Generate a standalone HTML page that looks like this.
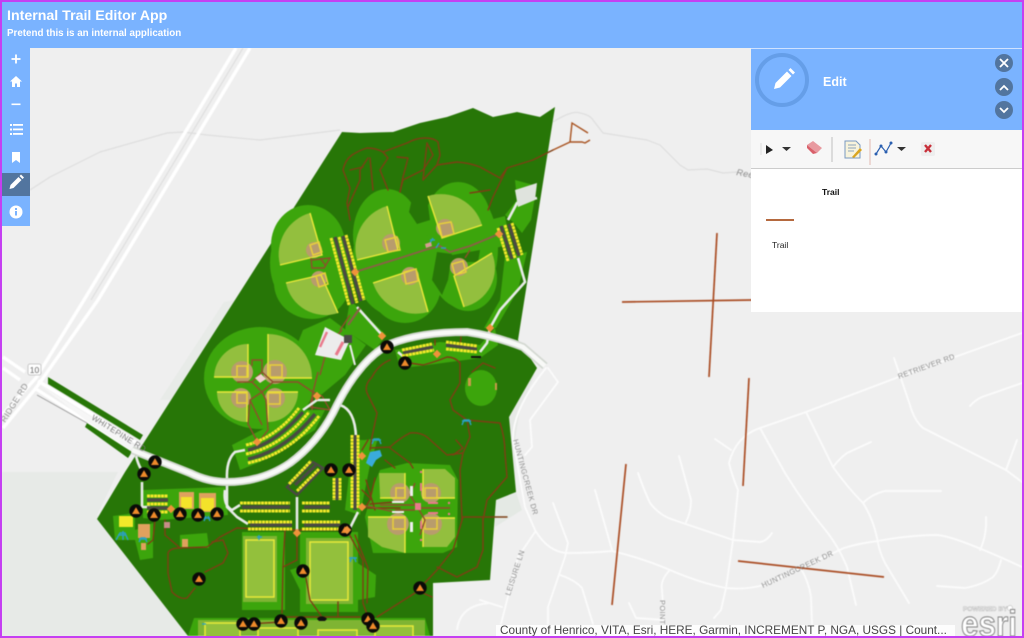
<!DOCTYPE html>
<html lang="en">
<head>
<meta charset="utf-8">
<title>Internal Trail Editor App</title>
<style>
html,body{margin:0;padding:0;width:1024px;height:638px;overflow:hidden;background:#efefef;font-family:"Liberation Sans",sans-serif}
#map{position:absolute;left:0;top:0;width:1024px;height:638px;filter:blur(.4px)}
#hdr{position:absolute;left:2px;top:2px;width:1020px;height:46px;background:#7ab3ff;color:#fff}
#hdr .a{position:absolute;left:5px;top:5px;font:bold 14.2px "Liberation Sans",sans-serif;white-space:nowrap}
#hdr .b{position:absolute;left:5px;top:25px;font:bold 9.8px "Liberation Sans",sans-serif;white-space:nowrap}
#side{position:absolute;left:2px;top:48px;width:28px;height:178px;background:#7ab3ff}
#act{position:absolute;left:0;top:125px;width:28px;height:23px;background:#52759f}
#panel{position:absolute;left:751px;top:48px;width:271px;height:264px;background:#fff}
#ph{position:absolute;left:0;top:0;width:271px;height:82px;background:#7ab3ff;border-top:1px solid #cfe2ff;box-sizing:border-box}
#ph .t{position:absolute;left:72px;top:26px;color:#fff;font:bold 12.5px "Liberation Sans",sans-serif}
#tb{position:absolute;left:0;top:82px;width:271px;height:39px;background:#f7f7f7;border-bottom:1px solid #ccc;box-sizing:border-box}
.lb{position:absolute;font-size:8.5px;color:#222;white-space:nowrap}
#attr{position:absolute;left:496px;top:625px;width:459px;height:11px;background:rgba(255,255,255,.85);overflow:hidden}
#attr span{position:absolute;left:4px;top:-2px;font-size:11.8px;color:#444;white-space:nowrap;line-height:14px}
#bd{position:absolute;left:0;top:0;width:1024px;height:638px;box-sizing:border-box;border:2px solid #c53ff2;pointer-events:none}
</style>
</head>
<body>
<svg id="map" viewBox="0 0 1024 638" xmlns="http://www.w3.org/2000/svg">
<defs>
<g id="m"><circle r="6.7" fill="#0a0a08"/><path d="M0-3.8L4 3H-4Z" fill="#ee8a2a"/></g>
<path id="dm" d="M0-4.2L4.2 0 0 4.2-4.2 0Z" fill="#f0923a"/>
</defs>
<rect width="1024" height="638" fill="#efefef"/>
<!-- pale -->
<path d="M2 472H118L97 515 188 636H2Z" fill="#e7eae7"/>
<path d="M224 302L235 300 172 400 160 400Z" fill="#e8ebe8"/>
<path d="M516 492L496 500 495 527 522 510Z" fill="#e4e9e4"/>
<path d="M509 417L528 378 535 374 520 410 515 440 516 492Z" fill="#e6e9e6"/>
<!-- contour paths -->
<g fill="none" stroke="#dedede" stroke-width="1.2" stroke-linejoin="round">
<path d="M30 190L50 177 100 152 167 133 183 132 207 135 260 140 340 130"/>
<path d="M553 122Q572 110 580 113 590 115 593 120L603 133 647 140 660 145 680 165 688 170 707 169 723 173 737 172 752 178"/>
</g>
<!-- highway -->
<g fill="none" stroke="#fff" stroke-width="3.4">
<path d="M236 48L84 300 36 378 3 414"/>
<path d="M250 48L98 300 36 388 3 428"/>
<path d="M3 357L25 372"/><path d="M3 368L20 380"/>
<path d="M38 381L90 413 140 445"/><path d="M36 389L88 422 130 450"/>
</g>
<path d="M243 48L91 300" stroke="#dcdcdc" stroke-width="1" fill="none"/>
<path d="M37 395L87 423" stroke="#9c9c9c" stroke-width="1" fill="none"/>
<path d="M40 385L90 416 135 446 130 450 88 422Z" fill="#f6f6f6"/>
<!-- local roads -->
<g fill="none" stroke="#fbfbfb" stroke-width="1.9" stroke-linejoin="round" stroke-linecap="round">
<path d="M1022 333L896 378 806 412 760 428Q736 436 729 463Q732 476 738 490L733 540 726 588 721 610 714 618"/>
<path d="M548 368L558 382 530 420 532 447 525 455"/>
<path d="M546 368Q512 410 513 440L525 507 535 530Q548 552 567 553Q590 553 612 551 642 558 670 570 700 583 726 588 745 590 764 585L844 548Q860 543 878 541 910 535 937 535 955 536 1022 567"/>
<path d="M715 439L731 450"/>
<path d="M760 428L785 473Q805 505 823 527 838 545 847 567L856 605"/>
<path d="M806 412L833 467Q848 488 863 503 874 520 878 543 880 553 885 563L909 603"/>
<path d="M833 467Q840 458 847 453L871 442"/>
<path d="M863 503Q872 494 885 491L941 491"/>
<path d="M894 358L910 405Q914 420 923 428L1006 470 1022 482"/>
<path d="M970 406Q975 400 982 397L1022 383"/>
<path d="M1006 470L1017 440"/>
<path d="M986 517Q987 535 980 550"/>
<path d="M1001 560Q998 572 993 577 982 585 965 588L937 586"/>
<path d="M800 567Q809 582 811 597L812 624"/>
<path d="M638 473Q644 490 650 503 660 516 674 520L733 540 760 542Q767 541 772 533"/>
<path d="M679 456L691 500Q691 512 686 522"/>
<path d="M595 490L612 550"/>
<path d="M553 503L568 543 565 557 548 607V624"/>
<path d="M560 575Q575 580 582 588L593 624"/>
<path d="M535 532L518 557 501 624"/>
<path d="M480 600L502 607"/>
<path d="M670 570Q660 580 662 590L664 620"/>
<path d="M629 603L636 618 664 620"/>
</g>
<!-- main site -->
<path d="M342 132L360 133 393 132 420 123 447 117 473 108 493 117 517 112 540 117 555 107 518 340 537 368 509 417 516 492 496 500 490 580 433 583 433 636H188L97 519 125 472 235 300Z" fill="#277607"/>
<path d="M48 377L143 435 140 440 48 384Z" fill="#277607"/>
<path d="M87 423L132 452 128 458 85 427Z" fill="#277607"/>
<path d="M457 630Q460 605 490 603" fill="none" stroke="#fafafa" stroke-width="2"/>
<!-- medium pads -->
<g fill="#3ca50c">
<ellipse cx="308" cy="245" rx="37" ry="40"/>
<ellipse cx="312" cy="283" rx="38" ry="36"/>
<ellipse cx="310" cy="263" rx="40" ry="50"/>
<ellipse cx="387" cy="235" rx="34" ry="46"/>
<ellipse cx="405" cy="285" rx="36" ry="38"/>
<ellipse cx="395" cy="258" rx="42" ry="58"/>
<ellipse cx="458" cy="222" rx="33" ry="40"/>
<ellipse cx="468" cy="278" rx="29" ry="33"/>
<ellipse cx="462" cy="248" rx="36" ry="60"/>
<path d="M345 262L420 238 505 216 510 244 440 264 360 292Z"/>
<path d="M515 180L537 186 531 220 522 233 513 222 505 215 517 200Z"/>
<path d="M505 256L527 252 518 290 496 328 484 328 500 300Z"/>
<path d="M350 300L386 335 375 350 345 330Z"/>
<path d="M303 330L330 318 366 345 345 375 315 400 295 350Z"/>
<ellipse cx="260" cy="378" rx="56" ry="51"/>
<path d="M232 445L300 410 325 410 315 430 260 462 240 470Z"/>
<path d="M395 350L440 342 480 345 495 328 498 345 480 358 420 366 400 368Z"/>
<path d="M353 440L365 440 378 438 370 465 360 515 345 510Z"/>
<path d="M380 470L407 463 450 465 458 480 457 547 443 553 373 553 365 517 373 487Z"/>
<ellipse cx="481" cy="388" rx="16" ry="18"/>
<path d="M113 516L135 513 135 530 153 523 153 558 140 560 135 540 115 540Z"/>
<path d="M143 490L225 487 228 515 160 520 143 518Z"/>
<path d="M180 535L207 533 209 548 180 548Z"/>
<path d="M242 532H285V610H242Z"/>
<path d="M300 532H358V612H300Z"/>
<path d="M353 560L376 575 375 597 358 600Z"/>
<path d="M290 570L305 565 300 590Z"/>
<path d="M194 618L425 618 430 636H188Z"/>
</g>
<path d="M447 256L480 250 478 262 447 262Z" fill="#277607"/>
<path d="M417 224L409 212 414 190 426 190 430 220Z" fill="#277607"/>
<path d="M437 252L452 254 448 280 442 295 432 280Z" fill="#277607"/>
<!-- soccer halos -->
<g fill="#7fb433">
<rect x="243" y="536" width="34" height="66"/>
<rect x="306" y="538" width="47" height="66"/>
<path d="M198 620H425V636H198Z"/>
</g>
<g fill="#93c03c" stroke="#e9e93a" stroke-width="1.5">
<rect x="246" y="540" width="28" height="57"/>
<rect x="310" y="542" width="38" height="58"/>
<rect x="205" y="623" width="35" height="16"/>
<rect x="258" y="628" width="40" height="14"/>
<rect x="318" y="630" width="39" height="14"/>
<rect x="375" y="626" width="38" height="16"/>
</g>
<!-- ball fields -->
<g fill="#93bf3e">
<path d="M322 255L310 213A43 43 0 0 0 280 265Z"/>
<path d="M321 275L286 283A40 40 0 0 0 338 313Z"/>
<path d="M398 250L387 206A44 44 0 0 0 357 260Z"/>
<path d="M416 269L373 283A45 45 0 0 0 428 312Z"/>
<path d="M442 238L428 196A43 43 0 0 1 482 225Z"/>
<path d="M454 276L492 253A40 40 0 0 1 464 307Z"/>
<path d="M248 377V344A34 34 0 0 0 214 377Z"/>
<path d="M268 378V334A44 44 0 0 1 312 378Z"/>
<path d="M247 392H217A30 30 0 0 0 247 422Z"/>
<path d="M268 392H298A30 30 0 0 1 268 422Z"/>
<path d="M379 473L405 473 405 500 380 497Z"/>
<path d="M423 469L445 469 455 478 455 498 423 500Z"/>
<path d="M368 517L405 517 405 553 382 547 368 537Z"/>
<path d="M423 518L455 518 455 537 447 547 423 547Z"/>
</g>
<!-- infields -->
<g fill="#b89c6c">
<circle cx="314" cy="250" r="8"/><circle cx="319" cy="279" r="8"/>
<circle cx="391" cy="243" r="9"/><circle cx="410" cy="276" r="9"/>
<circle cx="445" cy="228" r="9"/><circle cx="459" cy="267" r="9"/>
<circle cx="242" cy="372" r="11"/><circle cx="275" cy="372" r="12"/>
<circle cx="241" cy="398" r="10"/><circle cx="275" cy="398" r="10"/>
<circle cx="400" cy="493" r="10"/><circle cx="431" cy="493" r="10"/>
<circle cx="398" cy="524" r="11"/><circle cx="431" cy="524" r="11"/>
</g>
<!-- yellow lines -->
<g fill="none" stroke="#ece93a" stroke-width="1.4">
<path d="M310 213L322 255 280 265"/><path d="M286 283L321 275 338 313"/>
<path d="M387 206L398 250 357 260"/><path d="M373 283L416 269 428 312"/>
<path d="M428 196L442 238 482 225"/><path d="M492 253L454 276 464 307"/>
<path d="M248 344V377H214"/><path d="M268 334V378H312"/>
<path d="M217 392H247V422"/><path d="M298 392H268V422"/>
<path d="M405 473V498H380"/><path d="M423 469V498H455"/>
<path d="M368 517H405V553"/><path d="M455 518H423V547"/>
</g>
<g fill="none" stroke="#e8d03a" stroke-width="1.5">
<path d="M310 245l9-3 3 10-9 3z"/><path d="M316 276l9-3 3 11-9 3z"/>
<path d="M385 240l12-3 3 13-12 2z"/><path d="M404 272l12-3 2 12-12 3z"/>
<path d="M439 224l12-2 3 12-12 3z"/><path d="M452 264l11-3 3 11-11 3z"/>
<path d="M237 366h10v11h-10z"/><path d="M270 365h12v12h-12z"/>
<path d="M237 393h10v10h-10z"/><path d="M268 393h12v11h-12z"/>
<path d="M396 488h9v10h-9z"/><path d="M425 488h12v10h-12z"/>
<path d="M393 518h12v11h-12z"/><path d="M425 518h12v11h-12z"/>
</g>
<!-- trails -->
<g fill="none" stroke="#7c3f14" stroke-width="1.4" stroke-linejoin="round" stroke-linecap="round">
<path d="M350 220L347 203 350 188 343 170Q345 160 352 155 360 150 367 148 376 148 383 152L407 143Q416 138 425 138 434 138 438 142L440 155 437 165 457 162Q470 163 480 167L500 178 507 168 533 160 553 150" />
<path d="M507 168L493 197 488 210"/><path d="M490 190L470 193"/>
<path d="M427 143L433 155 423 170 403 180 400 192"/><path d="M427 143L423 180"/>
<path d="M383 152L388 158 380 170 388 190"/>
<path d="M397 157L408 158 403 177 400 192"/>
<path d="M368 158L360 170 360 180 348 207"/><path d="M370 158L373 190"/><path d="M350 170L363 167"/>
<path d="M437 165L423 180"/>
<path d="M390 360Q378 365 372 377 364 385 367 393L377 413 372 437 370 450"/>
<path d="M403 362L423 365Q435 362 447 357 455 357 460 363V383L450 400 453 410 467 420 470 437 463 453 460 470 462 520"/>
<path d="M370 448L390 447Q400 438 410 433 420 432 427 437L447 455 463 453"/>
<path d="M390 448L410 463 413 468"/>
<path d="M467 420L500 423Q505 438 505 453L507 477 487 500 483 520"/>
<path d="M463 517H507"/>
<path d="M472 372L483 363 495 368"/>
<path d="M453 455L463 448 456 440"/>
<path d="M237 528L220 537 207 547 180 548Q170 548 168 553V573L172 592Q180 600 187 598L195 588"/>
<path d="M205 572L223 563 228 553 223 540 212 542"/>
<path d="M237 528L290 530 347 530"/>
<path d="M285 530L283 567 282 613"/><path d="M297 537V560L283 567"/>
<path d="M306 578L310 600 322 617"/>
<path d="M247 624L282 622 282 617 360 617"/>
<path d="M338 602V617"/>
<path d="M347 530L363 560V603L368 617"/>
<path d="M355 535L368 568 367 603"/>
<path d="M377 617L415 593 437 570 453 550 463 517"/>
<path d="M437 567L457 577 477 567 483 550V517"/>
<path d="M423 593L432 597"/>
<path d="M165 520V535L180 548"/>
<path d="M155 520L153 540 148 544"/>
<path d="M375 478L370 500 365 508M362 490L372 500M366 480L375 510"/>
<path d="M367 508H400M370 504L395 502"/>
<path d="M362 450L368 440"/><path d="M385 460L395 468"/>
<path d="M461 337L460 347"/><path d="M435 340V345"/>
</g>
<path d="M553 150L570 142 572 123 588 133M570 142H582L585 143 590 140" fill="none" stroke="#a8521f" stroke-width="1.4"/>
<!-- field networks -->
<g fill="none" stroke="#8e4f2c" stroke-width="1.4">
<path d="M355 272L400 258 425 250 440 246 450 252 470 246 499 234" stroke="#8a6046" stroke-width="1.8"/>
<path d="M470 250L465 258"/>
<path d="M312 260L330 258 324 268 312 268 311 258M320 258L326 266"/>
<path d="M350 315L340 330"/>
<path d="M252 366V360H262V372L273 382 262 392 252 382 262 372M252 382H237M273 382H298L313 392 312 410M262 392L250 400 248 424 258 443M262 392L266 400 268 430 258 443M250 400L262 425"/>
<path d="M318 372L313 392M322 396L313 392 310 407 330 410 322 396"/>
<path d="M320 375L328 345 342 330"/>
<path d="M380 505H418M418 508L410 495 415 483M418 508L425 520 420 535M418 508H450M395 510H415M362 505L395 512"/>
</g>
<g fill="#e9798b">
<path d="M255 378l6-4 5 5-6 4z" fill="#f0d0d0"/>
<rect x="415" y="503" width="6" height="7"/>
<rect x="420" y="483" width="2" height="8"/><rect x="420" y="521" width="2" height="8"/>
<rect x="428" y="502" width="10" height="2"/><rect x="428" y="512" width="10" height="2"/>
<circle cx="421" cy="472" r="1.2"/><circle cx="449" cy="503" r="1.2"/><circle cx="449" cy="514" r="1.2"/><circle cx="421" cy="540" r="1.2"/>
</g>
<g fill="#efefef">
<rect x="410" y="486" width="3" height="10"/><rect x="410" y="522" width="3" height="10"/>
<rect x="392" y="501" width="12" height="2"/><rect x="392" y="511" width="12" height="2"/>
</g>
<!-- white service roads -->
<g fill="none" stroke="#e8ebe8" stroke-width="2.6" stroke-linejoin="round">
<path d="M357 307L382 335"/>
<path d="M518 258L525 282 500 310 490 328 487 343 480 352"/>
<path d="M508 220L517 203 537 198"/>
<path d="M227 480Q226 460 235 452L245 450"/>
<path d="M227 483V507L237 517 248 524"/>
<path d="M297 497V530"/>
<path d="M340 405Q355 410 356 437"/>
<path d="M303 410L317 400H330"/>
<path d="M142 482V507H150"/>
<path d="M136 456Q140 472 148 476"/>
<path d="M398 352L405 358"/>
<path d="M340 530L350 528 358 512"/>
<path d="M225 490Q223 505 232 510L240 505"/>
</g>
<path d="M515 190L537 183 535 200 518 207Z" fill="#dfe3dd"/>
<!-- building -->
<path d="M325 327L350 340 341 360 315 355Z" fill="#ececec"/>
<path d="M320 347L327 332" stroke="#e9798b" stroke-width="2.4" fill="none"/>
<path d="M336 355L343 342" stroke="#e9798b" stroke-width="3" fill="none"/>
<path d="M344 335h8v8h-8z" fill="#4a4a45"/>
<path d="M348 325L360 308" stroke="#8a6046" stroke-width="2.2" fill="none"/>
<path d="M350 345L355 365" stroke="#ececec" stroke-width="2" fill="none"/>
<!-- main road -->
<g fill="none">
<path d="M132 450L190 473Q208 482 227 482Q262 482 290 463 317 443 333 413 345 388 357 373 372 353 390 344 420 332 467 332 495 336 523 347L545 366" stroke="#d3d8d1" stroke-width="8"/>
<path d="M132 450L190 473Q208 482 227 482Q262 482 290 463 317 443 333 413 345 388 357 373 372 353 390 344 420 332 467 332 495 336 523 347L545 366" stroke="#f8f9f7" stroke-width="4.5"/>
</g>
<!-- parking -->
<g fill="none">
<g stroke="#4a4a42" stroke-width="3.4">
<path d="M335 237L353 304M343 236L361 301"/>
<path d="M501 226L512 259M509 224L519 256"/>
<path d="M403 353L433 347M446 345L477 349"/>
<path d="M248 459Q285 451 315 414"/>
<path d="M248 450Q276 443 303 412" />
<path d="M287 487L313 462 323 468 297 495Z" stroke-width="2.4"/>
<path d="M295 485L316 465"/>
<path d="M337 478V500M355 435V510" stroke-width="4"/>
<path d="M242 507H290M304 507H330M250 525H292M304 525H340"/>
<path d="M147 500H168M147 508H168"/>
</g>
<g stroke="#f3e92a" stroke-width="3" stroke-dasharray="3 .5">
<path d="M331 238L349 305M339 237L357 303M346 235L364 300"/>
<path d="M498 228L508 261M505 225L515 258M512 223L522 255"/>
<path d="M402 350L432 344M402 356L434 350M446 342L477 346M446 349L477 352"/>
<path d="M246 445Q276 438 299 408M246 454Q281 447 309 412M248 463Q290 454 319 416"/>
<path d="M289 484L311 461M297 491L319 469"/>
<path d="M334 478V500M340 478V500M352 435V508M358 435V508"/>
<path d="M240 503H290M240 511H290M302 503H330M302 511H330M248 522H292M248 529H292M302 522H340M302 529H340"/>
<path d="M147 496H168M147 504H168M147 512H168"/>
</g>
</g>
<!-- left blocks -->
<rect x="119" y="516" width="14" height="11" fill="#f2e92a"/>
<rect x="138" y="524" width="12" height="14" fill="#e0a15e"/>
<rect x="141" y="543" width="5" height="7" fill="#e0a15e"/>
<rect x="179" y="492" width="15" height="17" fill="#e0a15e"/><rect x="181" y="497" width="11" height="11" fill="#f3e32a"/>
<rect x="199" y="493" width="17" height="19" fill="#e0a15e"/><rect x="201" y="498" width="13" height="13" fill="#f3e32a"/>
<rect x="182" y="539" width="6" height="8" fill="#e0a15e"/>
<rect x="164" y="522" width="6" height="6" fill="#c88c88"/>
<rect x="468" y="378" width="3" height="8" fill="#c99a4a"/><rect x="495" y="383" width="2" height="7" fill="#c99a4a"/>
<!-- teal -->
<g fill="none" stroke="#2aa0c4" stroke-width="1.4">
<path d="M116 540l4-7h5l3 7M118 535h8M123 531v9M139 542l2-4h4l2 4M139 539h8"/>
<path d="M204 518h6M204 521l2-5M210 521l-2-5"/>
<path d="M462 425l2-5h5l2 5M462 421h9"/>
<path d="M372 444l2-5h5l2 5M372 440h9"/>
<path d="M257 537h5M259 535v5"/>
<path d="M349 558h8M350 562l2-5M356 562l-2-5"/>
<path d="M298 573h8M299 577l2-5M305 577l-2-5"/>
<path d="M202 624h4"/>
<path d="M430 243l3-5M436 248l3-5M441 248h5M430 240h5"/>
</g>
<path d="M370 452L380 450 382 456 376 460 372 467 366 463Z" fill="#3aabdc"/>
<path d="M425 244l6-2 1 4-6 2z" fill="#e79aa0" opacity=".9"/>
<path d="M317 619c2-4 8-3 10 0l-2 2h-6z" fill="#111"/>
<path d="M471 356h10v2h-10z" fill="#111"/>
<!-- diamonds -->
<use href="#dm" x="355" y="272"/><use href="#dm" x="499" y="234"/><use href="#dm" x="382" y="336"/><use href="#dm" x="490" y="328"/>
<use href="#dm" x="437" y="354"/><use href="#dm" x="317" y="396"/><use href="#dm" x="257" y="442"/><use href="#dm" x="362" y="456"/>
<use href="#dm" x="362" y="507"/><use href="#dm" x="297" y="533"/><use href="#dm" x="171" y="509"/>
<!-- markers -->
<use href="#m" x="387" y="347"/><use href="#m" x="405" y="363"/><use href="#m" x="331" y="470"/><use href="#m" x="349" y="470"/>
<use href="#m" x="155" y="462"/><use href="#m" x="144" y="474"/><use href="#m" x="136" y="511"/><use href="#m" x="154" y="515"/>
<use href="#m" x="180" y="514"/><use href="#m" x="198" y="515"/><use href="#m" x="217" y="514"/><use href="#m" x="199" y="579"/>
<use href="#m" x="303" y="571"/><use href="#m" x="420" y="588"/><use href="#m" x="243" y="624"/><use href="#m" x="254" y="624"/>
<use href="#m" x="281" y="621"/><use href="#m" x="301" y="623"/><use href="#m" x="368" y="619"/><use href="#m" x="373" y="626"/>
<use href="#m" x="345" y="530"/>
<use href="#dm" x="347" y="530"/>
<!-- editable trails -->
<g stroke="#aa4d24" stroke-width="1.7" fill="none">
<path d="M717 233L709 377"/><path d="M622 302L752 300"/><path d="M749 378L743 486"/>
<path d="M626 464L612 605"/><path d="M738 561L884 577"/>
</g>
<!-- labels -->
<g font-family="'Liberation Sans',sans-serif" fill="#8d8d8d" font-size="7.5" letter-spacing=".35">
<text transform="translate(899 379) rotate(-20)">RETRIEVER RD</text>
<text transform="translate(763 588) rotate(-25)">HUNTINGCREEK  DR</text>
<text transform="translate(510 596) rotate(-72)">LEISURE LN</text>
<text transform="translate(660 600) rotate(90)">POINT</text>
<text transform="translate(513 440) rotate(75)">HUNTINGCREEK  DR</text>
<text transform="translate(91 419) rotate(32)" fill="#777" font-size="8">WHITEPINE  RD</text>
<text transform="translate(5 423) rotate(-58)" font-size="8.5">RIDGE RD</text>
<text transform="translate(736 175) rotate(10)" font-style="italic" font-size="9">Ree</text>
</g>
<rect x="28" y="364" width="13" height="11" rx="2" fill="#fff" stroke="#bbb" stroke-width=".8"/>
<text x="34.5" y="373" font-family="'Liberation Sans',sans-serif" font-size="8.5" fill="#666" text-anchor="middle">10</text>
<!-- esri -->
<text x="963" y="611" font-family="'Liberation Sans',sans-serif" font-size="6.5" font-weight="bold" fill="#fff" stroke="#9a9a9a" stroke-width=".3">POWERED BY</text>
<circle cx="1010" cy="608" r="2.6" fill="#fff" stroke="#999" stroke-width=".4"/>
<text x="961" y="636" font-family="'Liberation Sans',sans-serif" font-size="36" font-weight="bold" fill="#fff" stroke="#808080" stroke-width="1" textLength="56" lengthAdjust="spacingAndGlyphs">esri</text>
</svg>

<div id="hdr"><div class="a" style="top:6px">Internal Trail Editor App</div><div class="b" style="top:26px">Pretend this is an internal application</div></div>

<div id="side">
<div id="act"></div>
<svg width="28" height="178" viewBox="0 0 28 178" style="position:absolute;left:0;top:0" fill="#fff">
<path d="M9.500 11h9M14 6.500v9" stroke="#fff" stroke-width="1.800"/>
<path d="M14 28l-6 5.500h2V39h3v-3.500h2V39h3v-5.500h2z"/>
<rect x="9.500" y="55.500" width="9" height="1.600"/>
<g><rect x="8" y="76" width="2" height="2"/><rect x="11" y="76" width="10" height="1.800"/><rect x="8" y="80.500" width="2" height="2"/><rect x="11" y="80.500" width="10" height="1.800"/><rect x="8" y="85" width="2" height="2"/><rect x="11" y="85" width="10" height="1.800"/></g>
<path d="M10 104h8v11l-4-3-4 3z"/>
<path d="M9 142l1-4 8-8 3 3-8 8zM19 129l1.500-1.500 3 3L22 132z" transform="translate(-1.500 -1)"/>
<circle cx="14" cy="164" r="6.500"/>
<rect x="13" y="163" width="2" height="4.500" fill="#7ab3ff"/><rect x="13" y="160" width="2" height="2" fill="#7ab3ff"/>
</svg>
</div>

<div id="panel">
<div id="ph">
<svg width="271" height="81" viewBox="0 0 271 81" style="position:absolute;left:0;top:-1px">
<circle cx="31" cy="32" r="25" fill="none" stroke="#659ee8" stroke-width="4"/>
<path d="M23 41l1.500-6L36 23.500l4.500 4.500L29 39.500zM37.500 22l2-2 4.500 4.500-2 2z" fill="#fff"/>
<g fill="#52759f"><circle cx="253" cy="15" r="9"/><circle cx="253" cy="39" r="9"/><circle cx="253" cy="62" r="9"/></g>
<path d="M249 11l8 8M257 11l-8 8M249 42l4-4 4 4M249 60l4 4 4-4" stroke="#fff" stroke-width="1.800" fill="none"/>
</svg>
<div class="t">Edit</div>
</div>
<div id="tb">
<svg width="271" height="38" viewBox="0 0 271 38" style="position:absolute;left:0;top:0">
<path d="M10 13v12" stroke="#ddd" stroke-width="1"/>
<path d="M15 15v9l7-4z" fill="#222"/>
<path d="M31 17h9l-4.500 4z" fill="#333"/>
<path d="M56 15l6-4 9 7-5 5z" fill="#e89aa0"/><path d="M56 15l10 8 -4 1-6-6z" fill="#d9606a"/>
<path d="M81 7v25" stroke="#ccc" stroke-width="1.300"/>
<path d="M94 11h11l4 4v13H94z" fill="#f7f3dc" stroke="#7a9ac0" stroke-width="1"/><path d="M97 15h8M97 18h8M97 21h6" stroke="#6a8ab0" stroke-width=".8"/><path d="M101 27l8-9 2 2-8 8z" fill="#d9a520"/>
<path d="M119 9v26" stroke="#e0b8b0" stroke-width="1"/>
<g fill="none" stroke="#2a5fb0" stroke-width="1.200"><path d="M125 24l5-8 5 6 5-9"/></g>
<g fill="#2a5fb0"><circle cx="125" cy="24" r="1.500"/><circle cx="130" cy="16" r="1.500"/><circle cx="135" cy="22" r="1.500"/><circle cx="140" cy="13" r="1.500"/></g>
<path d="M146 17h9l-4.500 4z" fill="#333"/>
<rect x="170" y="12" width="14" height="14" rx="2" fill="#eee"/>
<path d="M174 15l6 7M180 15l-6 7" stroke="#c8303a" stroke-width="2.400"/>
</svg>
</div>
<div class="lb" style="left:71px;top:139px;font-weight:bold;color:#111">Trail</div>
<div style="position:absolute;left:15px;top:171px;width:28px;height:1.500px;background:#b5693e"></div>
<div class="lb" style="left:21px;top:192px">Trail</div>
</div>

<div id="attr"><span>County of Henrico, VITA, Esri, HERE, Garmin, INCREMENT P, NGA, USGS | Count...</span></div>
<div id="bd"></div>
</body>
</html>
